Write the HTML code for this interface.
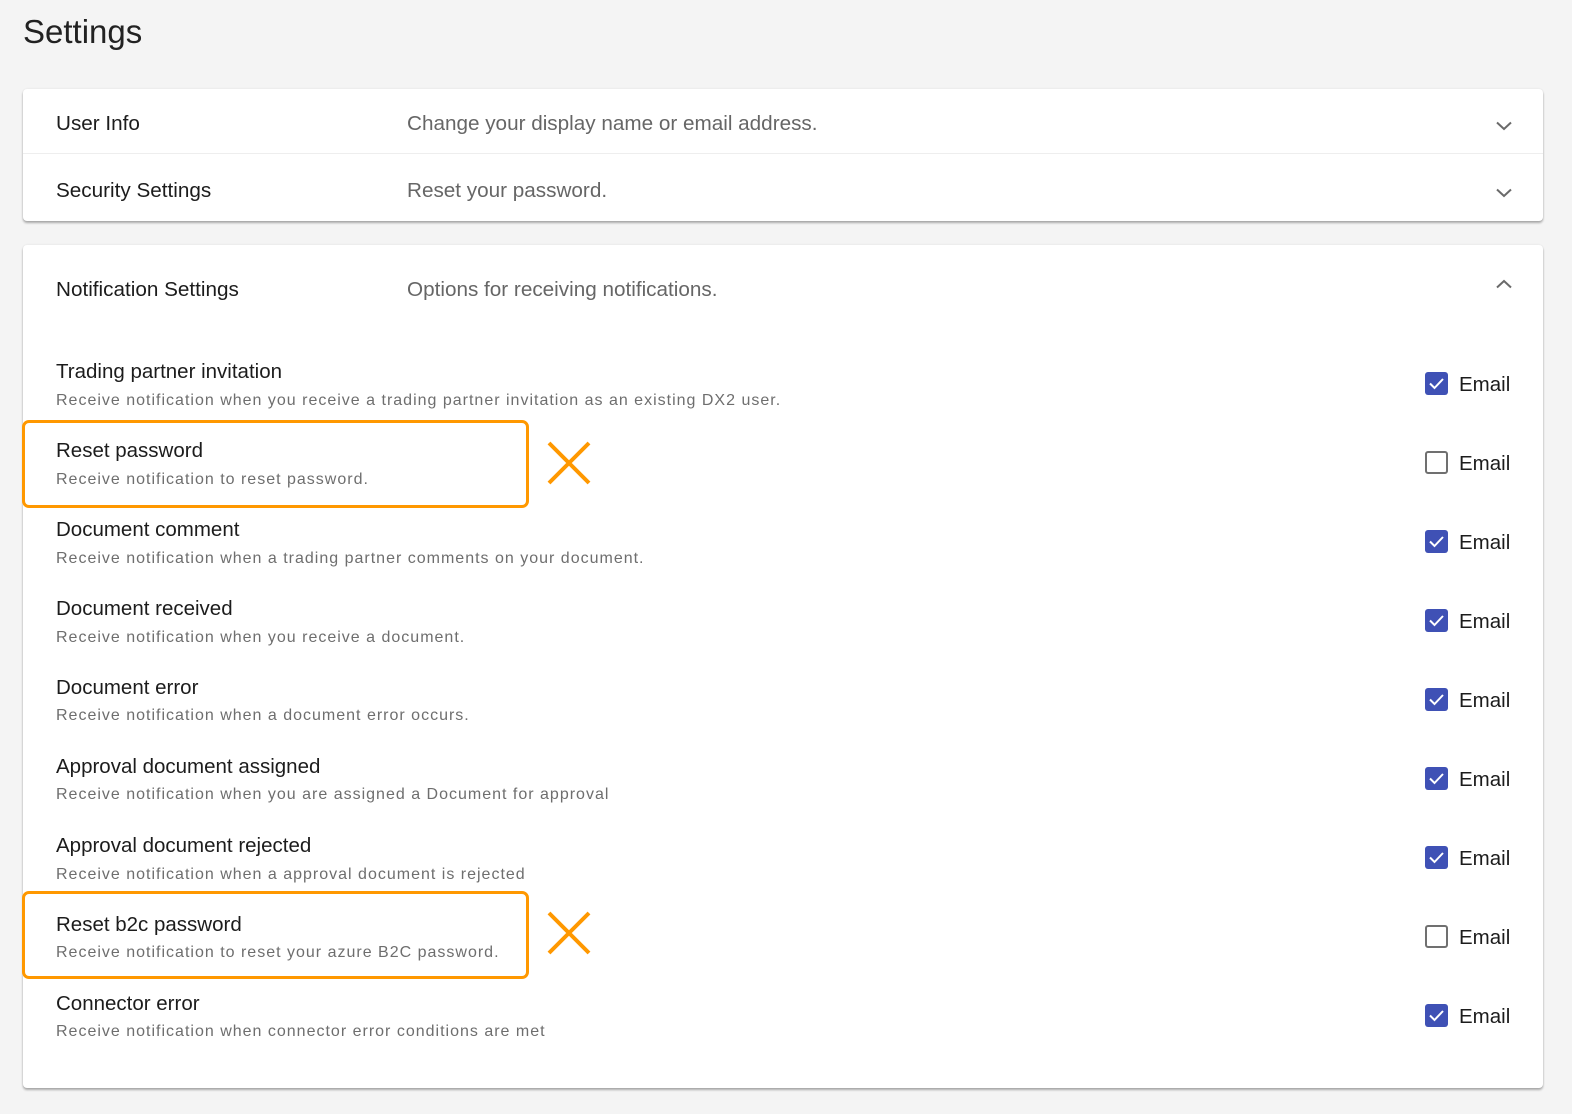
<!DOCTYPE html>
<html><head><meta charset="utf-8"><style>
*{margin:0;padding:0;box-sizing:border-box}
body{width:1572px;height:1114px;background:#f4f4f4;font-family:"Liberation Sans",sans-serif;position:relative;overflow:hidden;color:#1c1c1c}
.a{position:absolute;white-space:nowrap}
.card{position:absolute;left:23px;width:1520px;background:#fff;border-radius:4px;box-shadow:0 2px 2px rgba(0,0,0,.3),0 0 2px rgba(0,0,0,.08)}
.h{font-size:20.7px;color:#1c1c1c}
.s{font-size:20.7px;color:#666}
.t{font-size:20.5px;color:#1c1c1c}
.d{font-size:16px;color:#6e6e6e;letter-spacing:1px}
.cb{position:absolute;left:1425px;width:23px;height:23px;border-radius:3px}
.on{background:#3f51b5}
.off{border:2px solid #707070;background:#fff}
.em{position:absolute;left:1459px;font-size:20.5px;color:#1c1c1c}
.box{position:absolute;left:22px;width:507px;height:88px;border:3.5px solid #ff9800;border-radius:7px}
</style></head><body>
<div class="a" style="left:23px;top:13px;font-size:33px;color:#222">Settings</div>

<div class="card" style="top:89px;height:132px"></div>
<div class="a" style="left:23px;top:153px;width:1520px;height:1px;background:#eee"></div>
<div class="a h" style="left:56px;top:112px">User Info</div>
<div class="a s" style="left:407px;top:112px">Change your display name or email address.</div>
<div class="a h" style="left:56px;top:179px">Security Settings</div>
<div class="a s" style="left:407px;top:179px">Reset your password.</div>
<svg class="a" style="left:1496px;top:121px" width="16" height="10"><path d="M1 1.5l7 6.5 7-6.5" fill="none" stroke="#6a6a6a" stroke-width="2"/></svg>
<svg class="a" style="left:1496px;top:188px" width="16" height="10"><path d="M1 1.5l7 6.5 7-6.5" fill="none" stroke="#6a6a6a" stroke-width="2"/></svg>

<div class="card" style="top:245px;height:843px"></div>
<div class="a h" style="left:56px;top:278px">Notification Settings</div>
<div class="a s" style="left:407px;top:278px">Options for receiving notifications.</div>
<svg class="a" style="left:1496px;top:279px" width="16" height="10"><path d="M1 8.5l7-6.5 7 6.5" fill="none" stroke="#6a6a6a" stroke-width="2"/></svg>

<div class="a t" style="left:56px;top:360px">Trading partner invitation</div>
<div class="a d" style="left:56px;top:392px">Receive notification when you receive a trading partner invitation as an existing DX2 user.</div>
<div class="a t" style="left:56px;top:439px">Reset password</div>
<div class="a d" style="left:56px;top:471px">Receive notification to reset password.</div>
<div class="a t" style="left:56px;top:518px">Document comment</div>
<div class="a d" style="left:56px;top:550px">Receive notification when a trading partner comments on your document.</div>
<div class="a t" style="left:56px;top:597px">Document received</div>
<div class="a d" style="left:56px;top:629px">Receive notification when you receive a document.</div>
<div class="a t" style="left:56px;top:676px">Document error</div>
<div class="a d" style="left:56px;top:707px">Receive notification when a document error occurs.</div>
<div class="a t" style="left:56px;top:755px">Approval document assigned</div>
<div class="a d" style="left:56px;top:786px">Receive notification when you are assigned a Document for approval</div>
<div class="a t" style="left:56px;top:834px">Approval document rejected</div>
<div class="a d" style="left:56px;top:866px">Receive notification when a approval document is rejected</div>
<div class="a t" style="left:56px;top:913px">Reset b2c password</div>
<div class="a d" style="left:56px;top:944px">Receive notification to reset your azure B2C password.</div>
<div class="a t" style="left:56px;top:992px">Connector error</div>
<div class="a d" style="left:56px;top:1023px">Receive notification when connector error conditions are met</div>

<svg width="0" height="0" style="position:absolute"><defs><symbol id="ck" viewBox="0 0 23 23"><path d="M5 11.5l4.5 4.5 8.5-9" fill="none" stroke="#fff" stroke-width="2"/></symbol></defs></svg>
<div class="cb on" style="top:372px"><svg width="23" height="23"><use href="#ck"/></svg></div>
<div class="cb off" style="top:451px"></div>
<div class="cb on" style="top:530px"><svg width="23" height="23"><use href="#ck"/></svg></div>
<div class="cb on" style="top:609px"><svg width="23" height="23"><use href="#ck"/></svg></div>
<div class="cb on" style="top:688px"><svg width="23" height="23"><use href="#ck"/></svg></div>
<div class="cb on" style="top:767px"><svg width="23" height="23"><use href="#ck"/></svg></div>
<div class="cb on" style="top:846px"><svg width="23" height="23"><use href="#ck"/></svg></div>
<div class="cb off" style="top:925px"></div>
<div class="cb on" style="top:1004px"><svg width="23" height="23"><use href="#ck"/></svg></div>
<div class="em" style="top:373px">Email</div>
<div class="em" style="top:452px">Email</div>
<div class="em" style="top:531px">Email</div>
<div class="em" style="top:610px">Email</div>
<div class="em" style="top:689px">Email</div>
<div class="em" style="top:768px">Email</div>
<div class="em" style="top:847px">Email</div>
<div class="em" style="top:926px">Email</div>
<div class="em" style="top:1005px">Email</div>

<div class="box" style="top:420px"></div>
<div class="box" style="top:891px"></div>
<svg class="a" style="left:546px;top:440px" width="46" height="46"><path d="M3 3l40 40M43 3L3 43" stroke="#ff9800" stroke-width="4"/></svg>
<svg class="a" style="left:546px;top:910px" width="46" height="46"><path d="M3 3l40 40M43 3L3 43" stroke="#ff9800" stroke-width="4"/></svg>
</body></html>
